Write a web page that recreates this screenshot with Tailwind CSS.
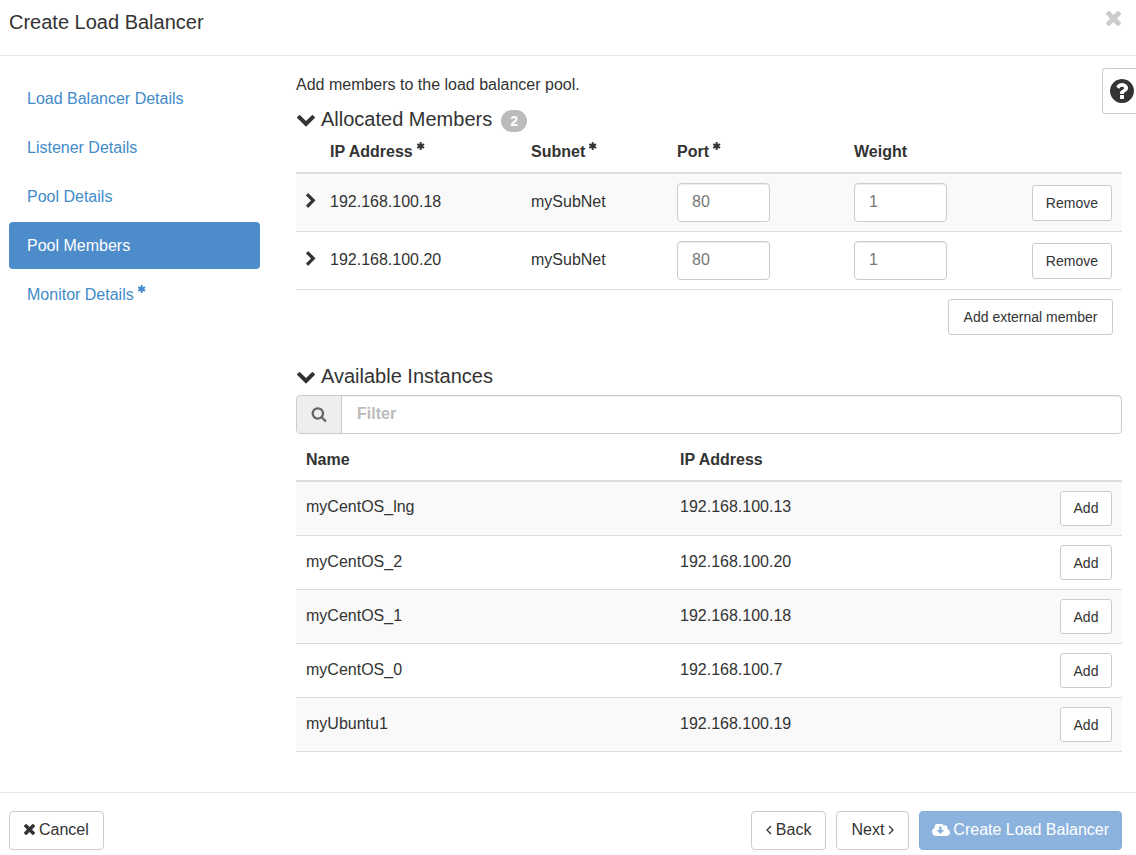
<!DOCTYPE html>
<html lang="en">
<head>
<meta charset="utf-8">
<meta name="viewport" content="width=device-width, initial-scale=1">
<title>Create Load Balancer</title>
<script src="https://cdn.jsdelivr.net/npm/@tailwindcss/browser@4"></script>
</head>
<body class="flex min-h-screen flex-col bg-white font-['Liberation_Sans',Arial,sans-serif] text-base text-[#333]">
<svg class="hidden" aria-hidden="true">
  <symbol id="times" viewBox="110 366 1188 1188"><path d="M1298 1322q0 40-28 68l-136 136q-28 28-68 28t-68-28l-294-294-294 294q-28 28-68 28t-68-28l-136-136q-28-28-28-68t28-68l294-294-294-294q-28-28-28-68t28-68l136-136q28-28 68-28t68 28l294 294 294-294q28-28 68-28t68 28l136 136q28 28 28 68t-28 68l-294 294 294 294q28 28 28 68z"/></symbol>
  <symbol id="down" viewBox="0 0 1792 1792"><path d="M1683 808l-742 741q-19 19-45 19t-45-19l-742-741q-19-19-19-45.500t19-45.500l166-165q19-19 45-19t45 19l531 531 531-531q19-19 45-19t45 19l166 165q19 19 19 45.500t-19 45.500z"/></symbol>
  <symbol id="right" viewBox="0 0 1792 1792"><path d="M1363 877l-742 742q-19 19-45 19t-45-19l-166-166q-19-19-19-45t19-45l531-531-531-531q-19-19-19-45t19-45l166-166q19-19 45-19t45 19l742 742q19 19 19 45t-19 45z"/></symbol>
  <symbol id="search" viewBox="0 0 1792 1792"><path d="M1216 832q0-185-131.500-316.500t-316.500-131.500-316.500 131.500-131.500 316.500 131.500 316.500 316.500 131.500 316.500-131.500 131.500-316.500zm512 832q0 52-38 90t-90 38q-54 0-90-38l-343-342q-179 124-399 124-143 0-273.500-55.500t-225-150-150-225-55.500-273.500 55.500-273.500 150-225 225-150 273.500-55.500 273.500 55.500 225 150 150 225 55.500 273.500q0 220-124 399l343 343q37 37 37 90z"/></symbol>
  <symbol id="question" viewBox="128 128 1536 1536"><path d="M1024 1376v-192q0-14-9-23t-23-9h-192q-14 0-23 9t-9 23v192q0 14 9 23t23 9h192q14 0 23-9t9-23zm256-672q0-88-55.500-163t-138.500-116-170-41q-243 0-371 213-15 24 8 42l132 100q7 6 19 6 16 0 25-12 53-68 86-92 34-24 86-24 48 0 85.500 26t37.500 59q0 38-20 61t-68 45q-63 28-115.500 86.500t-52.500 125.500v36q0 14 9 23t23 9h192q14 0 23-9t9-23q0-19 21.500-49.500t54.500-49.500q32-18 49-28.500t46-35 44.500-48 28-60.500 12.500-81zm384 192q0 209-103 385.500t-279.500 279.500-385.500 103-385.500-103-279.500-279.500-103-385.500 103-385.500 279.500-279.500 385.500-103 385.500 103 279.500 279.500 103 385.500z"/></symbol>
  <symbol id="asterisk" viewBox="128 128 1536 1536"><path d="M1482 1050q46 26 59.500 77.500t-12.500 97.500l-64 110q-26 46-77.500 59.500t-97.500-12.500l-266-153v307q0 52-38 90t-90 38h-128q-52 0-90-38t-38-90v-307l-266 153q-46 26-97.500 12.500t-77.500-59.500l-64-110q-26-46-12.500-97.500t59.500-77.500l266-154-266-154q-46-26-59.500-77.500t12.500-97.500l64-110q26-46 77.500-59.500t97.500 12.500l266 153v-307q0-52 38-90t90-38h128q52 0 90 38t38 90v307l266-153q46-26 97.500-12.500t77.500 59.500l64 110q26 46 12.500 97.500t-59.500 77.500l-266 154z"/></symbol>
  <symbol id="cloud" viewBox="-64 256 1920 1280"><path transform="translate(-64 0)" d="M1280 928q0-14-9-23t-23-9h-224v-352q0-13-9.500-22.500t-22.500-9.500h-192q-13 0-22.500 9.500t-9.500 22.500v352h-224q-13 0-22.500 9.500t-9.500 22.500q0 14 9 23l352 352q9 9 23 9t23-9l351-351q10-12 10-24zm640 224q0 159-112.500 271.500t-271.500 112.500h-1088q-185 0-316.500-131.500t-131.500-316.500q0-130 70-240t188-165q-2-30-2-43 0-212 150-362t362-150q156 0 285.500 87t188.500 231q71-62 166-62 106 0 181 75t75 181q0 76-41 138 130 31 213.500 135.500t83.500 238.500z"/></symbol>
</svg>

<header class="flex items-start justify-between border-b border-[#e5e5e5] pt-2 pr-[15px] pb-[19px] pl-[9px]">
  <h1 class="text-xl leading-7">Create Load Balancer</h1>
  <button type="button" aria-label="Close" class="mt-[3px] text-[#ccc]"><svg class="size-[15px] fill-current"><use href="#times"/></svg></button>
</header>

<div class="relative flex flex-1 items-start gap-9 pr-[14px] pl-[9px]">
  <nav class="mt-[19px] flex w-[251px] shrink-0 flex-col gap-0.5 text-[#428bca]">
    <a href="#" class="rounded px-[18px] pt-3 pb-[11px] leading-6">Load Balancer Details</a>
    <a href="#" class="rounded px-[18px] pt-3 pb-[11px] leading-6">Listener Details</a>
    <a href="#" class="rounded px-[18px] pt-3 pb-[11px] leading-6">Pool Details</a>
    <a href="#" aria-current="step" class="rounded bg-[#4c8ccb] px-[18px] pt-3 pb-[11px] leading-6 text-white">Pool Members</a>
    <a href="#" class="flex items-start gap-1 rounded px-[18px] pt-3 pb-[11px] leading-6">Monitor Details<svg class="mt-0.5 size-2 fill-current"><use href="#asterisk"/></svg></a>
  </nav>

  <main class="min-w-0 flex-1 pt-[17px] pb-10">
    <p class="leading-6">Add members to the load balancer pool.</p>

    <section>
      <h2 class="mt-2 flex items-center text-xl leading-7"><svg class="mr-[5px] size-5 fill-current"><use href="#down"/></svg>Allocated Members<span class="mt-1 ml-[9px] rounded-full bg-[#bbb] px-[9px] py-[3px] text-sm leading-4 font-bold text-white">2</span></h2>
      <table class="w-full table-fixed border-b border-[#ddd] text-left">
        <colgroup><col class="w-[34px]"><col class="w-[201px]"><col class="w-[146px]"><col class="w-[177px]"><col class="w-[144px]"><col></colgroup>
        <thead>
          <tr class="border-b-2 border-[#ddd]">
            <td></td>
            <th class="pt-[7px] pb-2 leading-6"><span class="flex gap-1">IP Address<svg class="mt-0.5 size-2 fill-current"><use href="#asterisk"/></svg></span></th>
            <th class="pt-[7px] pb-2 leading-6"><span class="flex gap-1">Subnet<svg class="mt-0.5 size-2 fill-current"><use href="#asterisk"/></svg></span></th>
            <th class="pt-[7px] pb-2 leading-6"><span class="flex gap-1">Port<svg class="mt-0.5 size-2 fill-current"><use href="#asterisk"/></svg></span></th>
            <th class="pt-[7px] pb-2 leading-6">Weight</th>
            <td></td>
          </tr>
        </thead>
        <tbody>
          <tr class="h-[58px] border-t border-[#ddd] bg-[#f9f9f9]">
            <td class="pb-0.5 pl-[7px]"><button type="button" aria-label="Expand 192.168.100.18" class="block"><svg class="size-4 fill-current"><use href="#right"/></svg></button></td>
            <td>192.168.100.18</td><td>mySubNet</td>
            <td><input aria-label="Port for 192.168.100.18" placeholder="80" class="block h-[39px] w-[93px] rounded border border-[#ccc] bg-white px-[14px] shadow-[inset_0_1px_1px_rgba(0,0,0,0.075)] placeholder:text-[#777]"></td>
            <td><input aria-label="Weight for 192.168.100.18" placeholder="1" class="block h-[39px] w-[93px] rounded border border-[#ccc] bg-white px-[14px] shadow-[inset_0_1px_1px_rgba(0,0,0,0.075)] placeholder:text-[#777]"></td>
            <td class="pt-0.5 pr-2.5"><button type="button" class="ml-auto block h-9 rounded-[3px] border border-[#ccc] bg-white px-[13px] text-sm">Remove</button></td>
          </tr>
          <tr class="h-[58px] border-t border-[#ddd]">
            <td class="pb-0.5 pl-[7px]"><button type="button" aria-label="Expand 192.168.100.20" class="block"><svg class="size-4 fill-current"><use href="#right"/></svg></button></td>
            <td>192.168.100.20</td><td>mySubNet</td>
            <td><input aria-label="Port for 192.168.100.20" placeholder="80" class="block h-[39px] w-[93px] rounded border border-[#ccc] bg-white px-[14px] shadow-[inset_0_1px_1px_rgba(0,0,0,0.075)] placeholder:text-[#777]"></td>
            <td><input aria-label="Weight for 192.168.100.20" placeholder="1" class="block h-[39px] w-[93px] rounded border border-[#ccc] bg-white px-[14px] shadow-[inset_0_1px_1px_rgba(0,0,0,0.075)] placeholder:text-[#777]"></td>
            <td class="pt-0.5 pr-2.5"><button type="button" class="ml-auto block h-9 rounded-[3px] border border-[#ccc] bg-white px-[13px] text-sm">Remove</button></td>
          </tr>
        </tbody>
      </table>
      <div class="flex justify-end pt-[9px] pr-[9px]"><button type="button" class="h-9 min-w-[165px] rounded-[3px] border border-[#ccc] bg-white px-[13px] text-sm">Add external member</button></div>
    </section>

    <section class="mt-[27px]">
      <h2 class="flex items-center text-xl leading-7"><svg class="mr-[5px] size-5 fill-current"><use href="#down"/></svg>Available Instances</h2>
      <div class="mt-[5px] flex h-[39px] rounded border border-[#ccc]">
        <label for="filter" aria-label="Filter instances" class="flex w-[45px] items-center justify-center rounded-l-[3px] border-r border-[#ccc] bg-[#eee] text-[#666]"><svg class="size-4 fill-current"><use href="#search"/></svg></label>
        <input id="filter" placeholder="Filter" class="min-w-0 flex-1 rounded-r-[3px] px-[15px] font-bold shadow-[inset_0_1px_1px_rgba(0,0,0,0.075)] placeholder:text-[#bbb]">
      </div>
      <table class="w-full table-fixed border-b border-[#ddd] text-left">
        <colgroup><col class="w-[374px]"><col><col class="w-[100px]"></colgroup>
        <thead><tr class="border-b-2 border-[#ddd]"><th class="px-2.5 pt-[14px] pb-2 leading-6">Name</th><th class="px-2.5 pt-[14px] pb-2 leading-6">IP Address</th><td></td></tr></thead>
        <tbody>
          <tr class="h-[55px] border-t border-[#ddd] bg-[#f9f9f9]"><td class="px-2.5 pb-0.5">myCentOS_lng</td><td class="px-2.5 pb-0.5">192.168.100.13</td><td class="pr-2.5"><button type="button" class="ml-auto block h-[35px] min-w-[52px] rounded-[3px] border border-[#ccc] bg-white px-3 text-sm">Add</button></td></tr>
          <tr class="h-[54px] border-t border-[#ddd]"><td class="px-2.5 pb-0.5">myCentOS_2</td><td class="px-2.5 pb-0.5">192.168.100.20</td><td class="pr-2.5"><button type="button" class="ml-auto block h-[35px] min-w-[52px] rounded-[3px] border border-[#ccc] bg-white px-3 text-sm">Add</button></td></tr>
          <tr class="h-[54px] border-t border-[#ddd] bg-[#f9f9f9]"><td class="px-2.5 pb-0.5">myCentOS_1</td><td class="px-2.5 pb-0.5">192.168.100.18</td><td class="pr-2.5"><button type="button" class="ml-auto block h-[35px] min-w-[52px] rounded-[3px] border border-[#ccc] bg-white px-3 text-sm">Add</button></td></tr>
          <tr class="h-[54px] border-t border-[#ddd]"><td class="px-2.5 pb-0.5">myCentOS_0</td><td class="px-2.5 pb-0.5">192.168.100.7</td><td class="pr-2.5"><button type="button" class="ml-auto block h-[35px] min-w-[52px] rounded-[3px] border border-[#ccc] bg-white px-3 text-sm">Add</button></td></tr>
          <tr class="h-[54px] border-t border-[#ddd] bg-[#f9f9f9]"><td class="px-2.5 pb-0.5">myUbuntu1</td><td class="px-2.5 pb-0.5">192.168.100.19</td><td class="pr-2.5"><button type="button" class="ml-auto block h-[35px] min-w-[52px] rounded-[3px] border border-[#ccc] bg-white px-3 text-sm">Add</button></td></tr>
        </tbody>
      </table>
    </section>
  </main>

  <button type="button" aria-label="Help" class="absolute top-3 right-0 flex h-[46px] w-[34px] items-center justify-end rounded-l border border-r-0 border-[#ccc] bg-white pr-0.5"><svg class="size-6 fill-current"><use href="#question"/></svg></button>
</div>

<footer class="flex items-center gap-2.5 border-t border-[#e5e5e5] pt-[18px] pr-[14px] pb-[5px] pl-[9px]">
  <button type="button" class="mr-auto flex h-[39px] items-center gap-1 rounded border border-[#ccc] px-[14px] pb-0.5"><svg class="size-[11px] fill-current"><use href="#times"/></svg>Cancel</button>
  <button type="button" class="flex h-[39px] items-center gap-1 rounded border border-[#ccc] px-[14px] pb-0.5"><svg class="h-[10px] w-[6px] fill-none stroke-current" viewBox="0 0 6 10"><path d="M5 1 1 5l4 4" stroke-width="1.300"/></svg>Back</button>
  <button type="button" class="flex h-[39px] items-center gap-1 rounded border border-[#ccc] px-[14px] pb-0.5">Next<svg class="h-[10px] w-[6px] fill-none stroke-current" viewBox="0 0 6 10"><path d="m1 1 4 4-4 4" stroke-width="1.300"/></svg></button>
  <button type="button" disabled class="flex h-[39px] items-center gap-[3px] rounded border border-[#82add9] bg-[#8bb3dd] px-3 pb-0.5 text-white"><svg class="h-3 w-[18px] fill-current"><use href="#cloud"/></svg>Create Load Balancer</button>
</footer>
</body>
</html>
